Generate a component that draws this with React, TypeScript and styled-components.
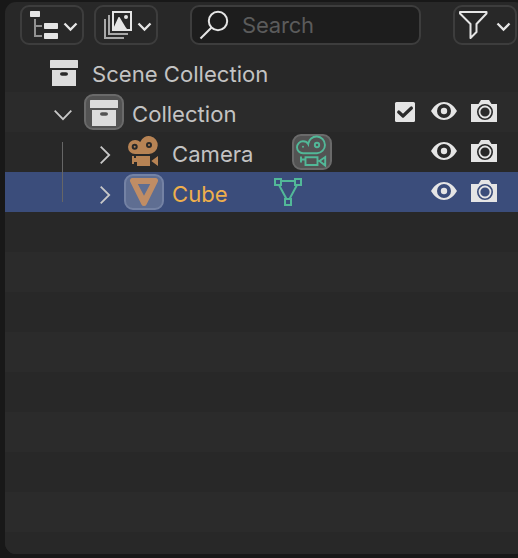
import React from 'react';
import styled, { createGlobalStyle } from 'styled-components';

const Global = createGlobalStyle`
  * { box-sizing: border-box; }
  html, body { margin: 0; background: #181818; }
  body { overflow: hidden; font-family: Inter, "Liberation Sans", sans-serif; }
  svg { display: block; flex: none; }
`;

const Viewport = styled.div`
  width: 518px;
  height: 558px;
  padding: 2px 0 4px 5px;
  overflow: hidden;
`;

const Panel = styled.section`
  width: 521px;
  height: 552px;
  border-radius: 11px;
  overflow: hidden;
  background: #282828;
`;

const Toolbar = styled.header`
  display: flex;
  height: 50px;
  padding: 3px 0 0 15px;
`;

const MenuButton = styled.button<{ $gap?: number }>`
  width: 64px;
  height: 40px;
  padding: 0;
  margin: 0 ${(p) => p.$gap ?? 0}px 0 0;
  border: 2px solid #3d3d3d;
  border-radius: 9px;
  background: #282828;
`;

const SearchField = styled.label`
  display: flex;
  align-items: center;
  width: 231px;
  height: 40px;
  margin-right: 32px;
  border: 2px solid #3d3d3d;
  border-radius: 9px;
  background: #1d1d1d;
`;

const SearchInput = styled.input`
  width: 160px;
  height: 36px;
  padding: 0 0 1px;
  margin: 0 0 0 2px;
  border: 0;
  outline: 0;
  background: transparent;
  font: 400 22px Inter, sans-serif;
  letter-spacing: -0.2px;
  color: #e6e6e6;
  &::placeholder { color: #5b5b5b; opacity: 1; }
`;

const Row = styled.div<{ $selected?: boolean }>`
  display: flex;
  height: 40px;
  padding-left: 39px;
  color: #c3c3c3;
  background: ${(p) => (p.$selected ? '#3b4d7b' : '#282828')};
  &:nth-child(even) { background: ${(p) => (p.$selected ? '#3b4d7b' : '#2b2b2b')}; }
`;

const Cell = styled.div`
  width: 40px;
  height: 40px;
  flex: none;
`;

const Guide = styled.div<{ $end?: boolean }>`
  width: 1px;
  height: 30px;
  margin: ${(p) => (p.$end ? '0' : '10px')} 21px 0 18px;
  background: #666;
`;

const Badge = styled.div<{ $tone?: 'blue' }>`
  width: 40px;
  height: 36px;
  margin: 2px 0;
  flex: none;
  border: 2px solid ${(p) => (p.$tone ? '#7482a4' : '#6a6a6a')};
  border-radius: 9px;
  background: ${(p) => (p.$tone ? '#5f6e92' : '#535353')};
  svg { margin: -4px 0 0 -2px; }
`;

const Label = styled.span<{ $active?: boolean; $w?: number }>`
  width: ${(p) => (p.$w ? `${p.$w}px` : 'auto')};
  padding-left: 8px;
  font-size: 22.1px;
  line-height: 45px;
  white-space: nowrap;
  color: ${(p) => (p.$active ? '#efaf4c' : 'inherit')};
`;

const Toggles = styled.div`
  display: flex;
  margin-left: auto;
  margin-right: 22px;
`;

const Icon = ({ children }: { children: React.ReactNode }) => (
  <svg width="40" height="40" viewBox="0 0 40 40" fill="none">{children}</svg>
);

const WHITE = '#e5e5e5';
const GREEN = '#52b898';

const TreeIcon = () => (
  <svg width="60" height="36" viewBox="-1 1 60 36" fill="none">
    <g fill={WHITE}>
      <rect x="7" y="5" width="10" height="6" rx=".7" />
      <rect x="21" y="17" width="14" height="6" rx=".7" />
      <rect x="21" y="27" width="14" height="6" rx=".7" />
    </g>
    <path d="M12 13v17h7M12 20h7" stroke="#929292" strokeWidth="2" />
    <path d="M41.500 17.500l6 6 6-6" stroke={WHITE} strokeWidth="2.3" />
  </svg>
);

const ImagesIcon = () => (
  <svg width="60" height="36" viewBox="0 0 60 36" fill="none">
    <path d="M13 8v19h19M9 12v19h19" stroke="#a8a8a8" strokeWidth="2" />
    <rect x="17" y="5" width="18" height="18" stroke={WHITE} strokeWidth="2" />
    <path d="M17 22l5.500-12h1l6 10 1.500 2v1H17z" fill={WHITE} />
    <circle cx="30" cy="10" r="2" fill={WHITE} />
    <path d="M42.500 16.500l6 6 6-6" stroke={WHITE} strokeWidth="2.3" />
  </svg>
);

const FilterIcon = () => (
  <svg width="60" height="36" viewBox="0 0 60 36" fill="none">
    <path d="M5 5h26.500v1.500L21.500 17v8L15.500 31V17L5 6.500z" stroke={WHITE} strokeWidth="2" strokeLinejoin="round" />
    <path d="M42.500 16.500l6 6 6-6" stroke={WHITE} strokeWidth="2.3" />
  </svg>
);

const SearchIcon = () => (
  <svg width="48" height="36" viewBox="0 0 48 36" fill="none" stroke={WHITE} strokeWidth="2">
    <circle cx="26" cy="14" r="9.200" />
    <path d="M19.300 20.700L8.500 31.500" />
  </svg>
);

const CollectionIcon = () => (
  <Icon>
    <rect x="6" y="8" width="28" height="8" rx=".6" fill="#dcdcdc" />
    <path fill="#dcdcdc" fillRule="evenodd" d="M8 18h24v16H8zM18 20.200h4q2 0 2 1.800t-2 1.800h-4q-2 0-2-1.800t2-1.800z" />
  </Icon>
);

const Expanded = () => (
  <Icon><path d="M10.700 18.700l8.300 8.500 8.300-8.500" stroke="#c8c8c8" strokeWidth="1.800" /></Icon>
);

const Collapsed = () => (
  <Icon><path d="M16.700 14.700l8.500 8.300-8.500 8.300" stroke="#c8c8c8" strokeWidth="1.800" /></Icon>
);

const CameraIcon = () => (
  <Icon>
    <g fill="#b78354">
      <path fillRule="evenodd" d="M11 8a6.900 6.900 0 0 1 5.200 2.100A9 9 0 1 1 25 22H11a7 7 0 0 1 0-14zM10.700 11.700a3 3 0 1 0 0 6 3 3 0 0 0 0-6zM25 10a3 3 0 1 0 0 6 3 3 0 0 0 0-6z" />
      <circle cx="10.700" cy="14.700" r="1" />
      <circle cx="25" cy="13" r="1" />
      <path d="M8 24h2v2h2v-2h14v10H13v-4h-3v2H8zM27.300 29L34 24v10z" />
    </g>
  </Icon>
);

const CameraDataIcon = () => (
  <Icon>
    <g stroke={GREEN} strokeWidth="1.900">
      <path d="M11 9.300c2.600 0 4.300 1 5.200 2.700A8.400 8.400 0 1 1 25 21.300H11a6 6 0 0 1 0-12z" />
      <circle cx="25" cy="13" r="2.200" />
      <path d="M13.500 25.200h12V33H13.500zM9 24.500v6M9 27.500h4M27.500 29l5.700-4v8.500z" />
    </g>
    <circle cx="11" cy="14.800" r="1" fill={GREEN} />
  </Icon>
);

const MeshIcon = () => (
  <Icon>
    <path fill="#c08d65" fillRule="evenodd" d="M8.500 6h23a2.600 2.600 0 0 1 2.300 3.800L22.500 32.500a2.800 2.800 0 0 1-5 0L6.200 9.800A2.600 2.600 0 0 1 8.500 6zM13.800 12L20 23.700 26.200 12z" />
  </Icon>
);

const MeshDataIcon = () => (
  <Icon>
    <path stroke={GREEN} strokeWidth="2" d="M7 7h6v6H7zM27 7h6v6h-6zM17 27h6v6h-6zM13 9h14M11 13l7.500 14M29 13l-7.500 14" />
  </Icon>
);

const Check = () => (
  <Icon>
    <rect x="11" y="10" width="20" height="20" rx="1.500" fill={WHITE} />
    <path d="M14.700 20l4.300 4 8.400-8" stroke="#2b2b2b" strokeWidth="3.200" strokeLinecap="round" strokeLinejoin="round" />
  </Icon>
);

const Eye = () => (
  <Icon>
    <path fill={WHITE} fillRule="evenodd" d="M7 19C14 7 26 7 33 19 26 31 14 31 7 19zM20 12a7 7 0 1 0 0 14 7 7 0 0 0 0-14z" />
    <circle cx="20" cy="19" r="3.200" fill={WHITE} />
  </Icon>
);

const Render = () => (
  <Icon>
    <path fill={WHITE} fillRule="evenodd" d="M7 12h7.500L17 8h8l2.500 4H33v18H7zM21 12a8 8 0 1 0 0 16 8 8 0 0 0 0-16z" />
    <circle cx="21" cy="20" r="5.500" stroke={WHITE} strokeWidth="1.800" />
  </Icon>
);

const Visibility = ({ checkbox = false }: { checkbox?: boolean }) => (
  <Toggles>
    {checkbox && <Check />}
    <Eye />
    <Render />
  </Toggles>
);

export default function App() {
  return (
    <Viewport>
      <Global />
      <Panel>
        <Toolbar>
          <MenuButton $gap={10}><TreeIcon /></MenuButton>
          <MenuButton $gap={32}><ImagesIcon /></MenuButton>
          <SearchField>
            <SearchIcon />
            <SearchInput placeholder="Search" />
          </SearchField>
          <MenuButton><FilterIcon /></MenuButton>
        </Toolbar>
        <div>
          <Row>
            <CollectionIcon />
            <Label>Scene Collection</Label>
          </Row>
          <Row>
            <Expanded />
            <Badge><CollectionIcon /></Badge>
            <Label>Collection</Label>
            <Visibility checkbox />
          </Row>
          <Row>
            <Guide />
            <Collapsed />
            <Cell><CameraIcon /></Cell>
            <Label $w={128}>Camera</Label>
            <Badge><CameraDataIcon /></Badge>
            <Visibility />
          </Row>
          <Row $selected>
            <Guide $end />
            <Collapsed />
            <Badge $tone="blue"><MeshIcon /></Badge>
            <Label $active $w={104}>Cube</Label>
            <MeshDataIcon />
            <Visibility />
          </Row>
          {Array.from({ length: 9 }, (_, i) => <Row key={i} />)}
        </div>
      </Panel>
    </Viewport>
  );
}
